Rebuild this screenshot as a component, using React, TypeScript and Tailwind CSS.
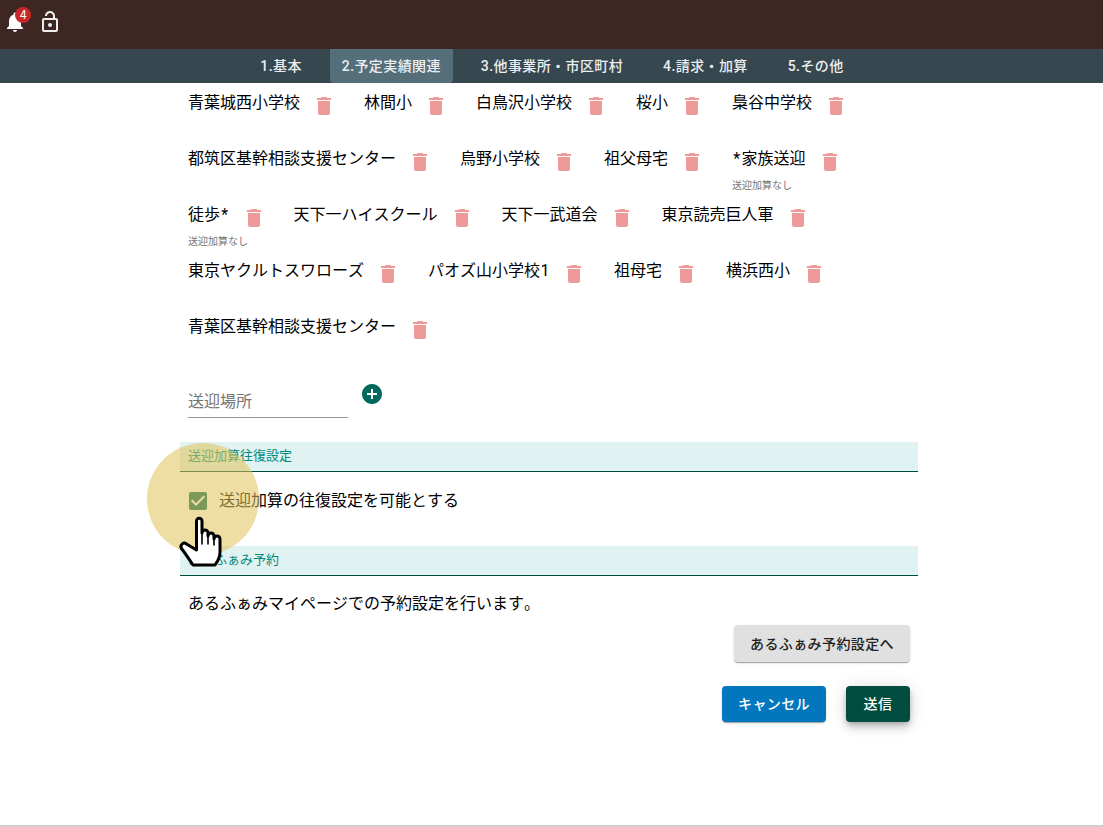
const JP = "font-['Roboto','Noto_Sans_CJK_JP',sans-serif] [font-kerning:none]";

type Item = { t: string; cap?: boolean };
const rows: Item[][] = [
  [{ t: "青葉城西小学校" }, { t: "林間小" }, { t: "白鳥沢小学校" }, { t: "桜小" }, { t: "梟谷中学校" }],
  [{ t: "都筑区基幹相談支援センター" }, { t: "烏野小学校" }, { t: "祖父母宅" }, { t: "*家族送迎", cap: true }],
  [{ t: "徒歩*", cap: true }, { t: "天下一ハイスクール" }, { t: "天下一武道会" }, { t: "東京読売巨人軍" }],
  [{ t: "東京ヤクルトスワローズ" }, { t: "パオズ山小学校1" }, { t: "祖母宅" }, { t: "横浜西小" }],
  [{ t: "青葉区基幹相談支援センター" }],
];

const tabs = ["1.基本", "2.予定実績関連", "3.他事業所・市区町村", "4.請求・加算", "5.その他"];

function Trash() {
  return (
    <svg viewBox="0 0 24 24" className="w-6 h-6 mt-[3px] ml-3 fill-[#ef9a9a] shrink-0">
      <path d="M6 19c0 1.1.9 2 2 2h8c1.1 0 2-.9 2-2V7H6v12zM19 4h-3.5l-1-1h-5l-1 1H5v2h14V4z" />
    </svg>
  );
}

function Label({ t }: { t: string }) {
  const i = t.search(/[*1]/);
  if (i < 0) return <>{t}</>;
  return (
    <>
      {t.slice(0, i)}
      <span className={`inline-block text-center ${t[i] === "*" ? "w-[9.5px]" : "w-[10px]"}`}>{t[i]}</span>
      {t.slice(i + 1)}
    </>
  );
}

function SectionHead({ children }: { children: React.ReactNode }) {
  return (
    <div className="h-[30px] bg-[#e0f2f1] border-b border-[#004d40] px-2 pb-[2px] flex items-center text-[13px] text-[#00897b]">
      {children}
    </div>
  );
}

const raised = "shadow-[0_2px_1px_-1px_rgba(0,0,0,0.2),0_1px_1px_0_rgba(0,0,0,0.14),0_1px_3px_0_rgba(0,0,0,0.12)]";

export default function App() {
  return (
    <div className={`relative h-[827px] overflow-hidden bg-white text-black ${JP}`}>
      <header className="h-[49px] bg-[#3e2723] flex items-start pl-[3px] pt-[10px] gap-[11px]">
        <div className="relative w-6 h-6">
          <svg viewBox="0 0 24 24" className="w-6 h-6 fill-white">
            <path d="M12 22c1.1 0 2-.9 2-2h-4c0 1.1.89 2 2 2zm6-6v-5c0-3.07-1.64-5.64-4.5-6.32V4c0-.83-.67-1.5-1.5-1.5s-1.5.67-1.5 1.5v.68C7.63 5.36 6 7.92 6 11v5l-2 2v1h16v-1l-2-2z" />
          </svg>
          <span className="absolute left-[12px] top-[-3px] w-4 h-4 rounded-full bg-[#c62828] text-white text-xs leading-4 text-center">4</span>
        </div>
        <svg viewBox="0 0 24 24" className="w-6 h-6 fill-[#eeeeee]">
          <path d="M18 8h-1V6c0-2.76-2.24-5-5-5S7 3.24 7 6h2c0-1.66 1.34-3 3-3s3 1.34 3 3v2H6c-1.1 0-2 .9-2 2v10c0 1.1.9 2 2 2h12c1.1 0 2-.9 2-2V10c0-1.1-.9-2-2-2zm0 12H6V10h12v10zm-6-3c1.1 0 2-.9 2-2s-.9-2-2-2-2 .9-2 2 .9 2 2 2z" />
        </svg>
      </header>
      <nav className="h-[34px] bg-[#37474f] flex justify-center gap-4 pl-[1px]">
        {tabs.map((t, i) => (
          <div
            key={t}
            className={`h-full px-3 flex items-center text-sm font-medium tracking-[0.4px] text-[#eceff1] ${i === 1 ? "bg-[#546e7a] rounded-b-[4px]" : ""}`}
          >
            {t}
          </div>
        ))}
      </nav>
      <main className="w-[738px] ml-[180px] pt-2">
        {rows.map((r, i) => (
          <div key={i} className="h-14 pl-2 flex gap-7">
            {r.map((it) => (
              <div key={it.t} className="flex items-start">
                <div className="relative leading-6 whitespace-nowrap">
                  <Label t={it.t} />
                  {it.cap && (
                    <div className="absolute left-0 top-[33px] text-[10px] leading-3 text-[#757575]">送迎加算なし</div>
                  )}
                </div>
                <Trash />
              </div>
            ))}
          </div>
        ))}
        <div className="mt-[1px] pl-2 flex items-start gap-3">
          <div className="w-40 h-[40px] mt-[6px] border-b border-[#949494] flex items-end pb-[3px] text-[#757575] leading-6">送迎場所</div>
          <svg viewBox="0 0 24 24" className="w-6 h-6 mt-[10px] fill-[#00695c]">
            <path d="M12 2C6.48 2 2 6.48 2 12s4.48 10 10 10 10-4.48 10-10S17.52 2 12 2zm5 11h-4v4h-2v-4H7v-2h4V7h2v4h4v2z" />
          </svg>
        </div>
        <div className="mt-6">
          <SectionHead>送迎加算往復設定</SectionHead>
        </div>
        <label className="h-[74px] pl-2 flex items-start pt-[17px]">
          <svg viewBox="0 0 24 24" className="w-6 h-6 ml-[-2px] shrink-0 fill-[#00695c]">
            <path d="M19 3H5c-1.11 0-2 .9-2 2v14c0 1.1.89 2 2 2h14c1.11 0 2-.9 2-2V5c0-1.1-.89-2-2-2zm-9 14-5-5 1.41-1.41L10 14.17l7.59-7.59L19 8l-9 9z" />
          </svg>
          <span className="ml-[9px] leading-6">送迎加算の往復設定を可能とする</span>
        </label>
        <SectionHead>あるふぁみ予約</SectionHead>
        <p className="pl-2 mt-4 leading-6">あるふぁみマイページでの予約設定を行います。</p>
        <div className="flex justify-end pr-2 mt-[9px]">
          <button className={`h-[37px] w-[176px] rounded bg-[#e0e0e0] text-[#212121] text-sm font-medium tracking-[0.4px] ${raised}`}>
            あるふぁみ予約設定へ
          </button>
        </div>
        <div className="flex justify-end pr-2 gap-5 mt-6">
          <button className={`h-9 w-[104px] rounded bg-[#0277bd] text-white text-sm font-medium tracking-[0.4px] ${raised}`}>
            キャンセル
          </button>
          <button className="h-9 w-16 rounded bg-[#004d40] text-white text-sm font-medium tracking-[0.4px] shadow-[0_3px_5px_-1px_rgba(0,0,0,0.2),0_6px_10px_0_rgba(0,0,0,0.14),0_1px_18px_0_rgba(0,0,0,0.12)]">
            送信
          </button>
        </div>
      </main>
      <div className="absolute left-0 right-0 bottom-0 h-[2px] bg-[#cfcfcf]" />
      <div className="absolute left-[147px] top-[443px] w-28 h-28 rounded-full bg-[#e0c357]/55 pointer-events-none" />
      <svg viewBox="0 0 50 56" className="absolute left-[177px] top-[514px] w-[50px] h-14 pointer-events-none">
        <path
          d="M19.5 36V7a2.75 2.75 0 0 1 5.5 0V19a3 3 0 0 1 6 0V22a3 3 0 0 1 6 0V25a3 3 0 0 1 6 0V38C43 45 40 48 38 51H16C12 45 8 39 4.5 34.5C2.5 31 6.5 27.5 9.5 30z"
          fill="#ffffff"
          stroke="#000000"
          strokeWidth="3"
          strokeLinejoin="round"
        />
        <path d="M25 19V30M31 22V30M37 25V31" fill="none" stroke="#000000" strokeWidth="1.6" strokeLinecap="round" />
      </svg>
    </div>
  );
}
